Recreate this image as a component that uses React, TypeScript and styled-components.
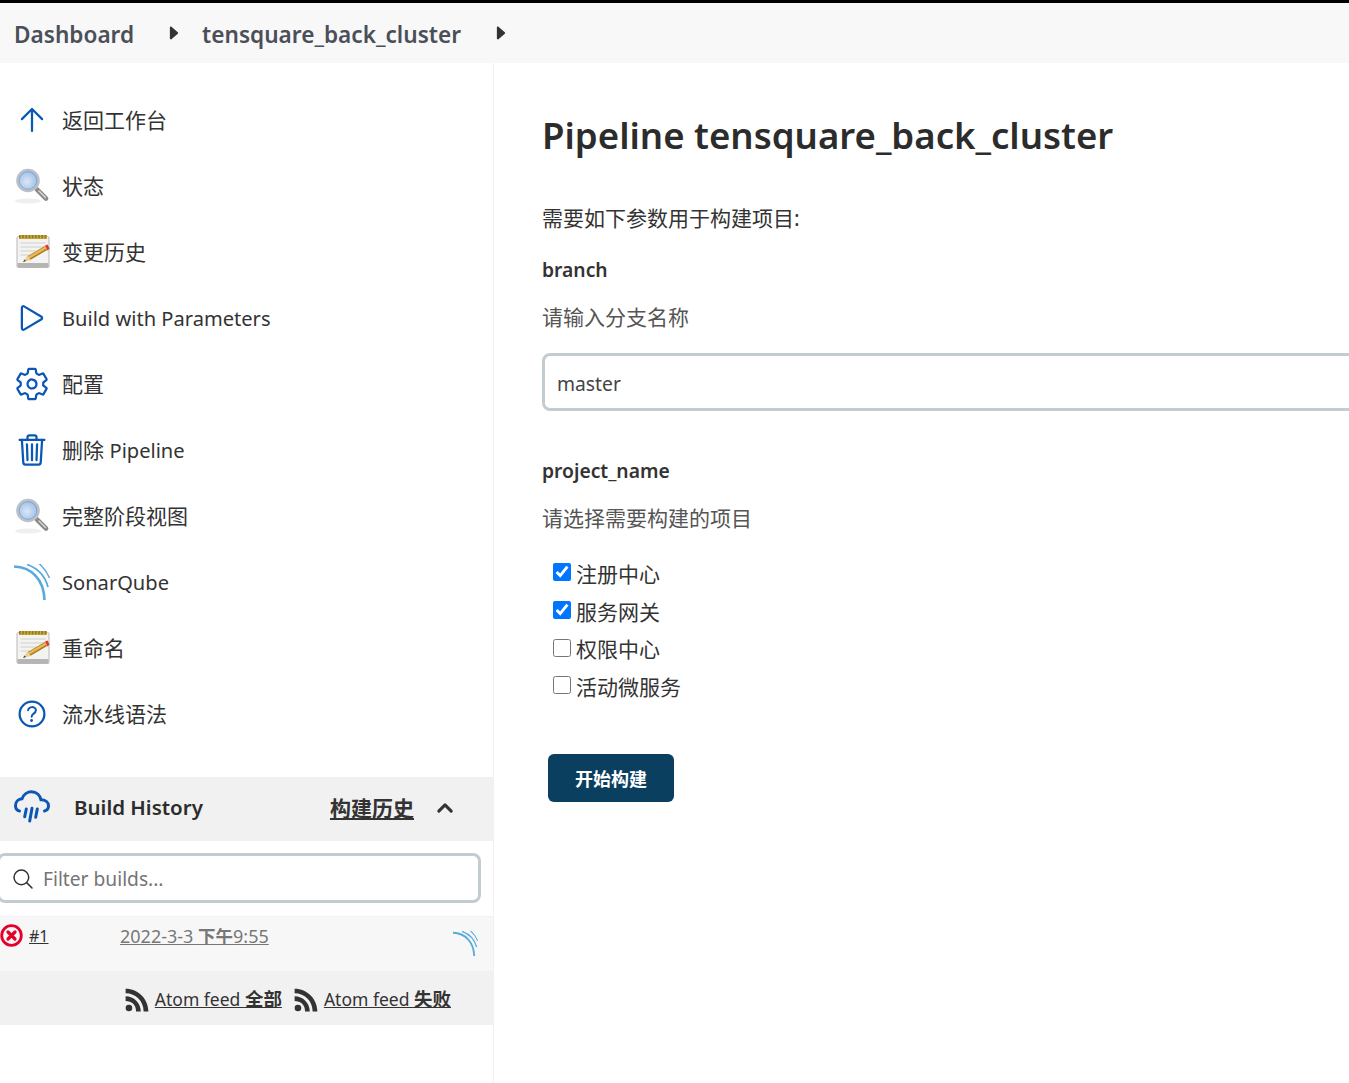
import { ReactNode } from 'react';
import styled, { createGlobalStyle } from 'styled-components';
import {
  IoArrowUpOutline,
  IoPlayOutline,
  IoSettingsOutline,
  IoTrashOutline,
  IoHelpCircleOutline,
  IoSearchOutline,
  IoChevronUp,
  IoLogoRss,
  IoCaretForward,
} from 'react-icons/io5';

const GlobalStyle = createGlobalStyle`
  html, body {
    margin: 0;
    padding: 0;
    height: 100%;
    background: #fff;
    overflow: hidden;
  }
  body {
    font-family: "Noto Sans", "Noto Sans CJK SC", sans-serif;
    color: #333;
  }
  #root {
    height: 100%;
  }
`;

const Page = styled.div`
  height: 1083px;
  display: flex;
  flex-direction: column;
  border-top: 3px solid #000;
  box-sizing: border-box;
  overflow: hidden;
`;

const Breadcrumbs = styled.div`
  flex: 0 0 60px;
  display: flex;
  align-items: center;
  background: #f8f8f8;
  padding-left: 14px;
  color: #4b4f58;
  font-size: 22.6px;
  font-weight: 600;

  span {
    margin-top: 2px;
  }

  svg {
    font-size: 20px;
    margin: 0 18px 1px 30px;
    color: #333;
  }
`;

const Columns = styled.div`
  flex: 1;
  display: flex;
  min-height: 0;
`;

const Sidebar = styled.aside`
  flex: 0 0 493px;
  border-right: 1px solid #f1f1f1;
  padding-top: 24px;
`;

const TaskList = styled.nav`
  display: flex;
  flex-direction: column;
  margin-bottom: 30px;
`;

const Task = styled.div`
  height: 66px;
  display: flex;
  align-items: center;
  white-space: pre;
  font-size: 21px;
  color: #333;
  box-sizing: border-box;
  padding-bottom: 2px;
`;

const Latin = styled.span`
  font-size: 20.1px;
  margin-top: 2px;
`;

const TaskIcon = styled.span`
  flex: 0 0 62px;
  display: flex;
  align-items: center;
  justify-content: center;
  padding-left: 2px;
  margin-top: 2px;
  box-sizing: border-box;
  color: #0b57b5;
  font-size: 36px;
  height: 36px;
`;

const ThinArrow = styled(IoArrowUpOutline)`
  path {
    stroke-width: 32px;
  }
`;

const BuildHistory = styled.section`
  border-top: 1px solid #f1f1f1;
`;

const HistoryHeader = styled.div`
  height: 63px;
  display: flex;
  align-items: center;
  background: #f1f1f1;
  padding-bottom: 5px;
  box-sizing: border-box;
  font-size: 20.5px;
  font-weight: 600;
  color: #2c2c2c;
`;

const HistoryIcon = styled.span`
  flex: 0 0 74px;
  display: flex;
  padding-left: 14px;
  box-sizing: border-box;
  color: #0b57b5;
`;

const HistoryLink = styled.a`
  margin-left: auto;
  font-size: 21px;
  font-weight: 700;
  text-decoration: underline;
  color: #333;
`;

const Collapse = styled.span`
  display: flex;
  margin: 1px 37px 0 20px;
  font-size: 22px;
  color: #333;

  path {
    stroke-width: 72px;
  }
`;

const FilterPane = styled.div`
  padding: 12px 12px 13px 0;
  margin-left: -3px;
`;

const FilterBox = styled.div`
  height: 50px;
  box-sizing: border-box;
  border: 3px solid #c3ccd1;
  border-radius: 8px;
  display: flex;
  align-items: center;
  gap: 8px;
  padding: 1px 0 0 11px;
  font-size: 19.2px;
  color: #757575;
  background: #fff;

  svg {
    font-size: 24px;
    color: #333;
  }
`;

const BuildRow = styled.div`
  height: 55px;
  display: flex;
  background: #f7f7f7;
  border-top: 1px solid #f1f1f1;
  box-sizing: border-box;
`;

const StatusIcon = styled.span`
  display: flex;
  margin: 7px 6px 0 0;
  height: 23px;
`;

const BuildNumber = styled.a`
  font-size: 16px;
  line-height: 24px;
  margin-top: 7px;
  width: 91px;
  text-decoration: underline;
  color: #333;
`;

const BuildDate = styled.a`
  font-size: 18px;
  line-height: 24px;
  margin-top: 7px;
  text-decoration: underline;
  color: #777;

  b {
    font-size: 17.5px;
    font-weight: 700;
  }
`;

const RowSonar = styled.span`
  margin: 14px 15px 0 auto;
  display: flex;
`;

const Feeds = styled.div`
  height: 54px;
  background: #f1f1f1;
  display: flex;
  align-items: center;
  justify-content: flex-end;
  padding-right: 42px;
  gap: 10px;
`;

const FeedLink = styled.a`
  display: flex;
  align-items: center;
  gap: 4px;
  color: #333;
  font-size: 17.5px;

  svg {
    font-size: 28px;
    margin-top: 3px;
  }

  span {
    text-decoration: underline;
    white-space: pre;
  }

  b {
    font-size: 18.5px;
    font-weight: 700;
  }
`;

const Main = styled.main`
  flex: 1;
  min-width: 0;
  overflow: hidden;
  padding: 43px 0 0 48px;
`;

const Title = styled.h1`
  margin: 0 0 40px;
  font-size: 36.6px;
  line-height: 58px;
  font-weight: 600;
  color: #2c2c2c;
`;

const Intro = styled.div`
  font-size: 21px;
  line-height: 28px;
  color: #333;
  margin-bottom: 24px;
`;

const ParamName = styled.div`
  font-size: 19.3px;
  line-height: 28px;
  font-weight: 600;
  color: #333;
  margin-bottom: 19px;
`;

const ParamHint = styled.div`
  font-size: 21px;
  line-height: 28px;
  color: #555;
`;

const TextField = styled.div`
  margin: 22px 0 46px;
  width: 1000px;
  height: 58px;
  box-sizing: border-box;
  border: 3px solid #c3ccd1;
  border-radius: 8px;
  display: flex;
  align-items: center;
  padding: 2px 0 0 12px;
  font-size: 19.3px;
  color: #444;
`;

const CheckList = styled.div`
  margin: 22px 0 0 11px;
  display: flex;
  flex-direction: column;
`;

const CheckRow = styled.label`
  height: 37.7px;
  display: flex;
  align-items: center;
  gap: 5px;
  font-size: 21px;
  color: #333;

  input {
    width: 18px;
    height: 18px;
    margin: 0 0 1px;
    accent-color: #0075ff;
  }
`;

const BuildButton = styled.button`
  display: block;
  margin: 49px 0 0 6px;
  width: 126px;
  height: 48px;
  border: none;
  border-radius: 6px;
  background: #0b3f60;
  color: #fff;
  font-family: inherit;
  font-size: 18px;
  font-weight: 700;
`;

function Magnifier() {
  return (
    <svg width="36" height="36" viewBox="0 0 36 36">
      <defs>
        <radialGradient id="lens" cx="45%" cy="55%" r="60%">
          <stop offset="0%" stopColor="#dbe7f7" />
          <stop offset="70%" stopColor="#a9c6ea" />
          <stop offset="100%" stopColor="#7fa6d8" />
        </radialGradient>
      </defs>
      <ellipse cx="14" cy="33" rx="13" ry="2.5" fill="#efefef" />
      <path d="M23 21.5 L32 30.5" stroke="#8a8a8a" strokeWidth="4.6" strokeLinecap="round" />
      <path d="M25 23 L31.5 29.5" stroke="#d9d9d9" strokeWidth="1.4" strokeLinecap="round" />
      <circle cx="14" cy="12.5" r="10.5" fill="url(#lens)" stroke="#bcc1c6" strokeWidth="2.6" />
      <circle cx="14" cy="12.5" r="8.8" fill="none" stroke="#7ea4d4" strokeWidth="0.9" />
    </svg>
  );
}

function Notepad() {
  return (
    <svg width="36" height="36" viewBox="0 0 36 36">
      <rect x="3" y="2.5" width="32" height="31" rx="1.5" fill="#f3f3f1" stroke="#b8b8b8" />
      <rect x="3.5" y="29" width="31" height="4.5" fill="#b5b5b5" />
      <rect x="5" y="1" width="28" height="4" fill="#c9a93a" />
      <path d="M5 2.6h28" stroke="#8f7a22" strokeWidth="3.2" strokeDasharray="1.6 1.6" />
      <path d="M6.5 9h25M6.5 13h25M6.5 17h16M6.5 21h9" stroke="#d0d0d0" strokeWidth="1.2" />
      <path d="M15 24 L32 14" stroke="#a87a22" strokeWidth="4.6" />
      <path d="M15 23.5 L32 13.5" stroke="#eeb94e" strokeWidth="2.6" />
      <path d="M9 28 L13.5 21.5 L17 26z" fill="#e9cf9a" />
      <path d="M9 28 L10.6 25.6 L12 27z" fill="#4a3a20" />
      <path d="M31 11.5 L33.5 10.5 L35.5 14.5 L33.5 16.5z" fill="#e0362b" />
    </svg>
  );
}

function Sonar({ size = 36 }: { size?: number }) {
  return (
    <svg width={size} height={size} viewBox="0 0 36 36" fill="none" stroke="#5aa9dc">
      <path d="M0 2.5 C17 3 30 15 30.5 36" strokeWidth="2.6" />
      <path d="M13 0.5 C23 4 31 12 34 23" strokeWidth="1.8" />
      <path d="M24.5 -1 C29 3 33 8 35.5 14" strokeWidth="1.5" />
    </svg>
  );
}

function RainCloud() {
  return (
    <svg width="36" height="34" viewBox="0 0 36 34" fill="none" stroke="#0b57b5" strokeWidth="3" strokeLinecap="round">
      <path d="M5.5 21 C2.5 20.5 1.5 18 1.5 15.5 C1.5 11.5 4.5 9 8 8.8 C9.5 4.5 13.5 1.8 17.5 1.8 C22.5 1.8 26 5.3 27 9.8 C31 9.8 34.5 12 34.5 15.8 C34.5 18.5 33 20.5 30.5 21" />
      <path d="M12.3 19 L10.7 26.7 M18 18.3 L15.7 31 M23.3 19 L21.7 27.3" />
    </svg>
  );
}

function FailedBall() {
  return (
    <svg width="23" height="23" viewBox="0 0 23 23" fill="none" stroke="#e4002b">
      <circle cx="11.5" cy="11.5" r="9.8" strokeWidth="2.8" />
      <path d="M8 8 L15 15 M15 8 L8 15" strokeWidth="3.2" strokeLinecap="round" />
    </svg>
  );
}

const tasks: { id: string; label: ReactNode; icon: ReactNode }[] = [
  { id: 'back', label: '返回工作台', icon: <ThinArrow /> },
  { id: 'status', label: '状态', icon: <Magnifier /> },
  { id: 'changes', label: '变更历史', icon: <Notepad /> },
  { id: 'build', label: <Latin>Build with Parameters</Latin>, icon: <IoPlayOutline /> },
  { id: 'config', label: '配置', icon: <IoSettingsOutline /> },
  {
    id: 'delete',
    label: (
      <>
        删除 <Latin>Pipeline</Latin>
      </>
    ),
    icon: <IoTrashOutline />,
  },
  { id: 'stages', label: '完整阶段视图', icon: <Magnifier /> },
  { id: 'sonar', label: <Latin>SonarQube</Latin>, icon: <Sonar /> },
  { id: 'rename', label: '重命名', icon: <Notepad /> },
  { id: 'syntax', label: '流水线语法', icon: <IoHelpCircleOutline /> },
];

const projects = [
  { label: '注册中心', checked: true },
  { label: '服务网关', checked: true },
  { label: '权限中心', checked: false },
  { label: '活动微服务', checked: false },
];

export default function App() {
  return (
    <>
      <GlobalStyle />
      <Page>
        <Breadcrumbs>
          <span>Dashboard</span>
          <IoCaretForward />
          <span>tensquare_back_cluster</span>
          <IoCaretForward />
        </Breadcrumbs>
        <Columns>
          <Sidebar>
            <TaskList>
              {tasks.map(task => (
                <Task key={task.id}>
                  <TaskIcon>{task.icon}</TaskIcon>
                  {task.label}
                </Task>
              ))}
            </TaskList>
            <BuildHistory>
              <HistoryHeader>
                <HistoryIcon>
                  <RainCloud />
                </HistoryIcon>
                Build History
                <HistoryLink>构建历史</HistoryLink>
                <Collapse>
                  <IoChevronUp />
                </Collapse>
              </HistoryHeader>
              <FilterPane>
                <FilterBox>
                  <IoSearchOutline />
                  Filter builds...
                </FilterBox>
              </FilterPane>
              <BuildRow>
                <StatusIcon>
                  <FailedBall />
                </StatusIcon>
                <BuildNumber>#1</BuildNumber>
                <BuildDate>
                  2022-3-3 <b>下午</b>9:55
                </BuildDate>
                <RowSonar>
                  <Sonar size={25} />
                </RowSonar>
              </BuildRow>
              <Feeds>
                <FeedLink>
                  <IoLogoRss />
                  <span>
                    Atom feed <b>全部</b>
                  </span>
                </FeedLink>
                <FeedLink>
                  <IoLogoRss />
                  <span>
                    Atom feed <b>失败</b>
                  </span>
                </FeedLink>
              </Feeds>
            </BuildHistory>
          </Sidebar>
          <Main>
            <Title>Pipeline tensquare_back_cluster</Title>
            <Intro>需要如下参数用于构建项目:</Intro>
            <ParamName>branch</ParamName>
            <ParamHint>请输入分支名称</ParamHint>
            <TextField>master</TextField>
            <ParamName>project_name</ParamName>
            <ParamHint>请选择需要构建的项目</ParamHint>
            <CheckList>
              {projects.map(project => (
                <CheckRow key={project.label}>
                  <input type="checkbox" defaultChecked={project.checked} />
                  {project.label}
                </CheckRow>
              ))}
            </CheckList>
            <BuildButton>开始构建</BuildButton>
          </Main>
        </Columns>
      </Page>
    </>
  );
}
